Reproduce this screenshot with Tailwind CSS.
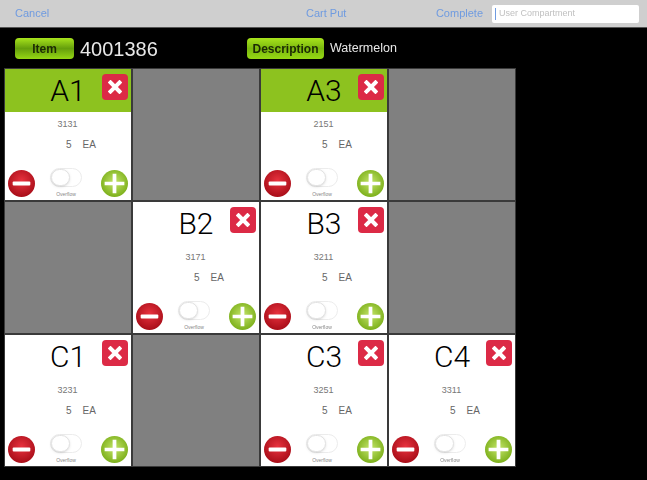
<!DOCTYPE html>
<html lang="en">
<head>
<meta charset="UTF-8">
<title>Cart Put</title>
<script src="https://cdn.jsdelivr.net/npm/@tailwindcss/browser@4"></script>
</head>
<body class="bg-black w-[647px] h-[480px] overflow-hidden font-['Liberation_Sans',sans-serif]">
<div class="blur-[0.6px]">
  <header class="relative h-[28px] bg-[#cfcfcf] border-b border-[#555] flex items-center text-[11px] text-[#6f9be0]">
    <span class="ml-[15px]">Cancel</span>
    <span class="absolute left-[306px]">Cart Put</span>
    <span class="ml-auto mr-[9px]">Complete</span>
    <div class="w-[147px] h-[18px] mr-[8px] bg-white rounded-[2px] flex items-center pl-[3px] text-[9px] text-[#c0c0c0]">
      <span class="w-px h-[12px] bg-[#6f9be0] mr-[3px]"></span>User Compartment
    </div>
  </header>
  <div class="h-[40px] pt-px flex items-center text-white">
    <div class="ml-[15px] w-[59px] h-[21px] rounded-[4px] bg-gradient-to-b from-[#a8e41c] via-[#659f0c] to-[#96d814] flex items-center justify-center text-[12px] font-bold text-[#1c2a04]">Item</div>
    <span class="ml-[6px] w-[167px] text-[20px] leading-none text-[#e8e8e8]">4001386</span>
    <div class="w-[77px] h-[21px] rounded-[4px] bg-gradient-to-b from-[#a8e41c] via-[#7ab80e] to-[#96d814] flex items-center justify-center text-[12px] font-bold text-[#1c2a04]">Description</div>
    <span class="ml-[6px] text-[12.5px] text-[#e8e8e8]">Watermelon</span>
  </div>
  <main id="grid" class="ml-[4px] w-[512px] grid grid-cols-4 auto-rows-[131px] gap-[2px] bg-[#3a3a3a] p-px"></main>
</div>

<script>
  const minusIcon = `<svg viewBox="0 0 26 26" class="w-[27px] h-[27px]">
    <defs><radialGradient id="r" cx="50%" cy="40%" r="60%"><stop offset="0" stop-color="#e8333f"/><stop offset="1" stop-color="#a80d18"/></radialGradient></defs>
    <circle cx="13" cy="13" r="13" fill="url(#r)"/><rect x="4.5" y="11" width="17" height="4" rx="1" fill="#fff"/></svg>`;
  const plusIcon = `<svg viewBox="0 0 26 26" class="w-[27px] h-[27px]">
    <defs><radialGradient id="g" cx="50%" cy="45%" r="60%"><stop offset="0" stop-color="#c4e56a"/><stop offset="1" stop-color="#76ab14"/></radialGradient></defs>
    <circle cx="13" cy="13" r="13" fill="url(#g)"/><path d="M11.2 3.5h3.6v7.7h7.7v3.6h-7.7v7.7h-3.6v-7.7H3.5v-3.6h7.7z" fill="#fff"/></svg>`;
  const closeIcon = `<div class="absolute right-[3px] top-[5px] w-[26px] h-[26px] rounded-[4px] bg-[#dc2a46] flex items-center justify-center">
    <svg viewBox="0 0 14 14" class="w-[14px] h-[14px]"><path d="M2.5 2.5l9 9M11.5 2.5l-9 9" stroke="#fff" stroke-width="4" stroke-linecap="square"/></svg></div>`;

  const cells = [
    ['A1', '3131', true], null, ['A3', '2151', true], null,
    null, ['B2', '3171'], ['B3', '3211'], null,
    ['C1', '3231'], null, ['C3', '3251'], ['C4', '3311'],
  ];

  document.getElementById('grid').innerHTML = cells.map(c => {
    if (!c) return `<div class="bg-[#808080]"></div>`;
    const [name, code, active] = c;
    return `<div class="relative bg-white flex flex-col text-black">
      <div class="h-[43px] pt-px flex items-center justify-center text-[30px] font-light font-['Roboto',sans-serif] leading-none ${active ? 'bg-[#8dc21f]' : ''}">${name}</div>
      ${closeIcon}
      <div class="mt-[6px] mr-[1px] text-center text-[9px] leading-[12px] text-[#777]">${code}</div>
      <div class="mt-[9px] ml-[61px] flex gap-[11px] text-[10px] leading-[12px] text-[#666]"><span>5</span><span>EA</span></div>
      <div class="mt-auto mb-[3px] px-[3px] flex items-end justify-between">
        ${minusIcon}
        <div class="flex flex-col items-center mb-[-1px] mr-[4px]">
          <div class="w-[32px] h-[19px] rounded-full border border-[#ececec] bg-white flex"><span class="w-[19px] h-[17px] rounded-full bg-white border border-[#e2e2e2] shadow-sm"></span></div>
          <span class="mt-[3px] text-[5px] leading-[8px] text-[#888]">Overflow</span>
        </div>
        ${plusIcon}
      </div>
    </div>`;
  }).join('');
</script>
</body>
</html>
